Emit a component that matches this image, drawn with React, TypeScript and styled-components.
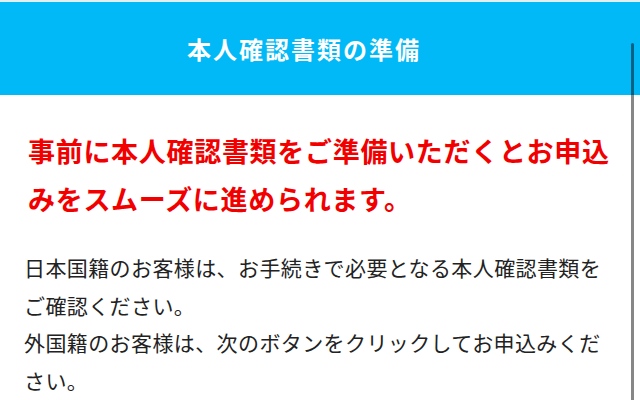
import React from "react";
import styled, { createGlobalStyle } from "styled-components";

const GlobalStyle = createGlobalStyle`
  html, body {
    margin: 0;
    padding: 0;
    height: 100%;
    overflow: hidden;
    background: #fff;
  }
  body {
    font-family: "Noto Sans CJK JP", "Noto Sans", sans-serif;
  }
`;

const Page = styled.div`
  position: relative;
  width: 640px;
  height: 400px;
  overflow: hidden;
  border-top: 2px solid #e3eef1;
  box-sizing: border-box;
`;

const Header = styled.header`
  height: 93px;
  background: #00b9f6;
  display: flex;
  align-items: center;
  justify-content: center;
  padding-right: 32px;
`;

const Title = styled.h1`
  margin: 0;
  color: #fff;
  font-size: 24px;
  font-weight: 700;
  letter-spacing: 2px;
`;

const Content = styled.main`
  padding: 32px 12px 0 24px;
`;

const Lead = styled.p`
  margin: 0 0 26px;
  padding-left: 4px;
  color: #f20000;
  font-size: 27px;
  font-weight: 700;
  letter-spacing: 0.7px;
  line-height: 48px;
`;

const Body = styled.p`
  margin: 0;
  padding-right: 12px;
  color: #222;
  font-size: 21px;
  letter-spacing: 0.4px;
  line-height: 37.5px;
`;

const ScrollThumb = styled.div`
  position: absolute;
  top: 41px;
  right: 6px;
  bottom: 0;
  width: 3px;
  border-radius: 2px 2px 0 0;
  background: rgba(0, 0, 0, 0.47);
`;

export default function App() {
  return (
    <>
      <GlobalStyle />
      <Page>
        <Header>
          <Title>本人確認書類の準備</Title>
        </Header>
        <Content>
          <Lead>事前に本人確認書類をご準備いただくとお申込みをスムーズに進められます。</Lead>
          <Body>
            日本国籍のお客様は、お手続きで必要となる本人確認書類をご確認ください。
            <br />
            外国籍のお客様は、次のボタンをクリックしてお申込みください。
          </Body>
        </Content>
        <ScrollThumb />
      </Page>
    </>
  );
}
